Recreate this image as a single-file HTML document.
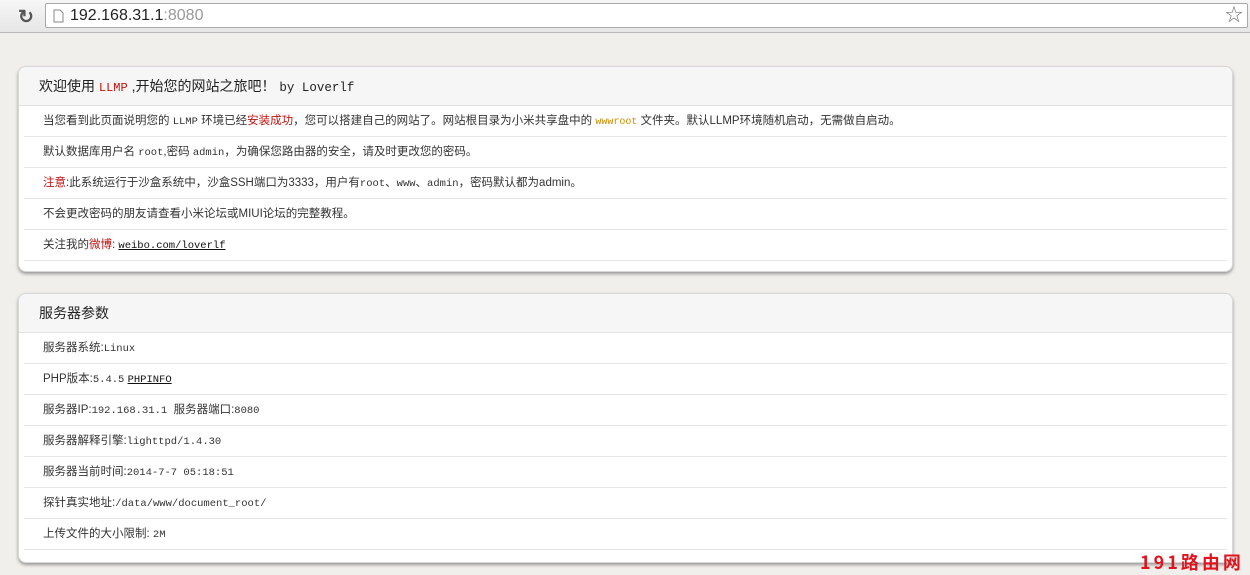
<!DOCTYPE html>
<html><head><meta charset="utf-8"><style>
*{margin:0;padding:0;box-sizing:border-box}
body{width:1250px;height:574px;overflow:hidden;background:#f1efeb;font-family:"Liberation Sans","Noto Sans CJK SC",sans-serif;position:relative}
.bar{position:absolute;left:0;top:0;width:1250px;height:33px;background:linear-gradient(#f6f6f6,#e6e6e6);border-bottom:1px solid #b9b9b9}
.url{position:absolute;left:45px;top:3px;width:1203px;height:25px;background:#fff;border:1px solid #a9a9a9;border-radius:2px;font-size:16px;line-height:23px;padding-left:24px;color:#222}
.url span{color:#999}
.panel{position:absolute;left:18px;width:1215px;background:#fff;border:1px solid #d8d8d8;border-radius:8px;box-shadow:0 2px 3px #999}
.hd{height:39px;background:#f6f6f6;border-bottom:1px solid #e2e2e2;border-radius:8px 8px 0 0;font-size:14px;line-height:39px;padding-left:20px;color:#222}
.row{height:31px;margin:0 5px;border-bottom:1px solid #e6e6e6;font-size:11.5px;line-height:30px;padding-left:19px;color:#333}
.m{font-family:"Liberation Mono",monospace;font-size:10.5px}
.r{color:#c0130f}.o{color:#d08c00}
a{color:#111;text-decoration:underline}
.wm{position:absolute;left:1140px;top:550px;font-size:18px;font-weight:bold;color:#e0141e;letter-spacing:3px;white-space:nowrap;font-family:"Noto Sans CJK SC",sans-serif;line-height:24px}
</style></head><body>
<div class="bar">
<div style="position:absolute;left:18px;top:6px;font-size:19px;color:#555;font-weight:bold">&#x21bb;</div>
<div class="url"><svg style="position:absolute;left:7px;top:5px" width="11" height="14"><path d="M1 1h6l3 3v9H1z" fill="#fff" stroke="#888"/></svg>192.168.31.1<span>:8080</span>
<div style="position:absolute;right:4px;top:0;color:#777;font-size:18px">☆</div></div>
</div>
<div class="panel" style="top:66px;height:206px">
<div class="hd">欢迎使用 <span class="r m" style="font-size:12px">LLMP</span> ,开始您的网站之旅吧！ <span class="m" style="font-size:12.5px">by Loverlf</span></div>
<div class="row">当您看到此页面说明您的 <span class="m">LLMP</span> 环境已经<span class="r">安装成功</span>，您可以搭建自己的网站了。网站根目录为小米共享盘中的 <span class="o m" style="font-size:10px">wwwroot</span> 文件夹。默认LLMP环境随机启动，无需做自启动。</div>
<div class="row">默认数据库用户名 <span class="m">root</span>,密码 <span class="m">admin</span>，为确保您路由器的安全，请及时更改您的密码。</div>
<div class="row"><span class="r">注意</span>:此系统运行于沙盒系统中，沙盒SSH端口为3333，用户有<span class="m">root</span>、<span class="m">www</span>、<span class="m">admin</span>，密码默认都为admin。</div>
<div class="row">不会更改密码的朋友请查看小米论坛或MIUI论坛的完整教程。</div>
<div class="row">关注我的<span class="r">微博</span>: <a class="m">weibo.com/loverlf</a></div>
</div>
<div class="panel" style="top:293px;height:270px">
<div class="hd">服务器参数</div>
<div class="row">服务器系统:<span class="m">Linux</span></div>
<div class="row">PHP版本:<span class="m">5.4.5</span> <a class="m">PHPINFO</a></div>
<div class="row">服务器IP:<span class="m">192.168.31.1</span>&nbsp; 服务器端口:<span class="m">8080</span></div>
<div class="row">服务器解释引擎:<span class="m">lighttpd/1.4.30</span></div>
<div class="row">服务器当前时间:<span class="m">2014-7-7 05:18:51</span></div>
<div class="row">探针真实地址:<span class="m">/data/www/document_root/</span></div>
<div class="row">上传文件的大小限制: <span class="m">2M</span></div>
</div>
<div class="wm">191路由网</div>
</body></html>
